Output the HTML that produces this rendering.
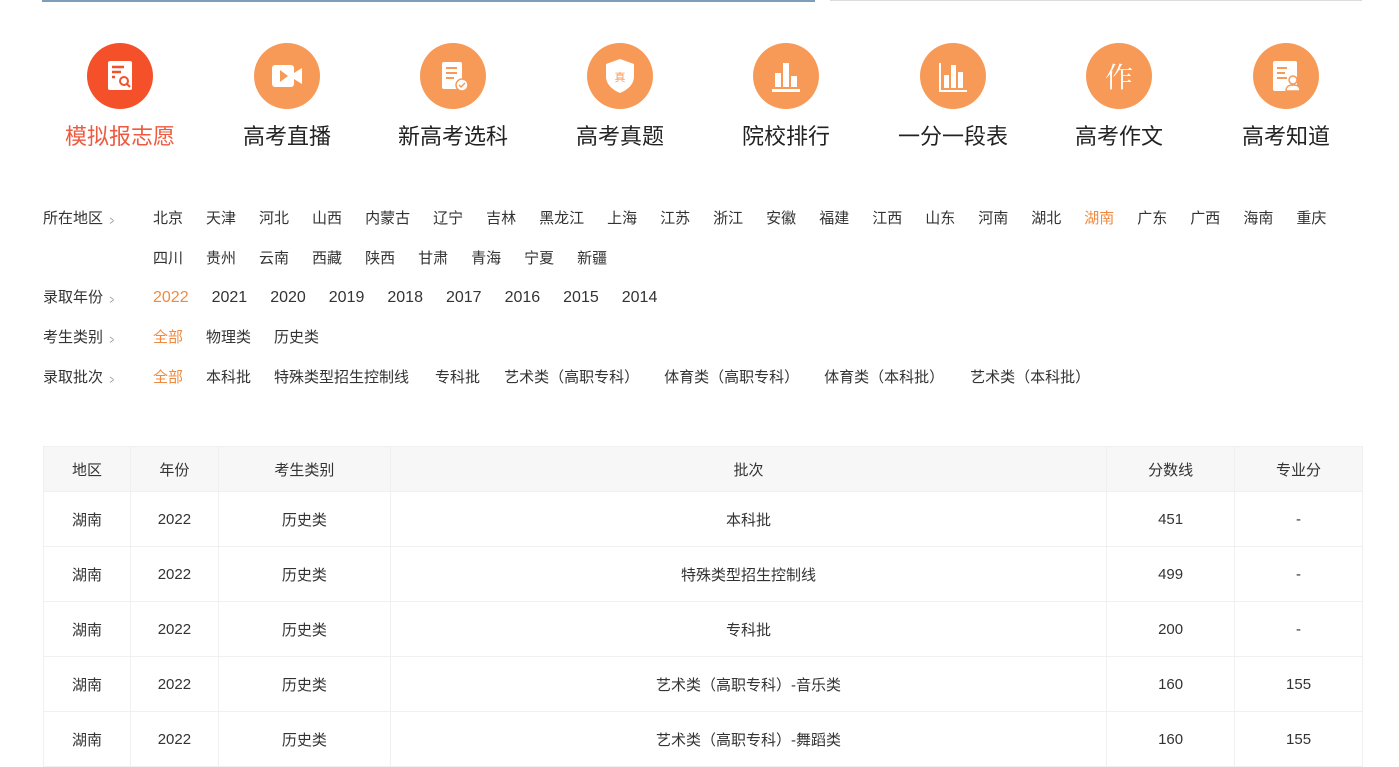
<!DOCTYPE html>
<html><head><meta charset="utf-8">
<style>
*{margin:0;padding:0;box-sizing:border-box}
body{width:1399px;height:750px;overflow:hidden;background:#fff;position:relative;font-family:"Liberation Sans","Noto Sans CJK SC",sans-serif;color:#333}
.topl{position:absolute;top:0;height:2px}
.ic{position:absolute;top:43px;width:66px;height:66px;border-radius:50%;background:#f89a57}
.ic svg{position:absolute;left:0;top:0}
.lb{position:absolute;top:122px;width:160px;text-align:center;font-size:22px;color:#222;line-height:30px}
.fl{position:absolute;left:43px;font-size:15px;color:#333;line-height:20px}
.fl span.ar{display:inline-block;color:#999;font-size:13px;margin-left:5px;transform:scaleX(.6) translateY(2px)}
.row{position:absolute;left:153px;font-size:15px;line-height:20px;white-space:nowrap;color:#333}
.row span{margin-right:23px}
.row .on{color:#f08a40}
table{position:absolute;left:43px;top:446px;width:1320px;border-collapse:collapse;font-size:15px;color:#333}
td,th{border:1px solid #f0f0f0;text-align:center;font-weight:normal;height:55px}
th{background:#f7f7f7;height:45px}
</style></head><body>
<div class="topl" style="left:42px;width:773px;background:#7d9db8"></div>
<div class="topl" style="left:830px;width:532px;background:#ddd;height:1px"></div>

<div class="ic" style="left:87px;background:#f4512b"><svg width="66" height="66"><rect x="21" y="18" width="24" height="29" rx="2" fill="#fff"/><path d="M25 24h12M25 29h9M25 34h3" stroke="#f4512b" stroke-width="2.5"/><circle cx="37" cy="38" r="4" fill="none" stroke="#f4512b" stroke-width="2"/><path d="M40 41l3 3" stroke="#f4512b" stroke-width="2"/></svg></div>
<div class="ic" style="left:254px"><svg width="66" height="66"><rect x="18" y="22" width="22" height="22" rx="3" fill="#fff"/><path d="M40 30l8-5v16l-8-5z" fill="#fff"/><path d="M26 27v12l8-6z" fill="#f89a57"/></svg></div>
<div class="ic" style="left:420px"><svg width="66" height="66"><rect x="22" y="19" width="20" height="27" rx="2" fill="#fff"/><path d="M26 25h11M26 30h11M26 35h8" stroke="#f89a57" stroke-width="2"/><circle cx="42" cy="42" r="6" fill="#fff" stroke="#f89a57" stroke-width="1.5"/><path d="M39 42l2 2 4-4" stroke="#f89a57" stroke-width="1.5" fill="none"/></svg></div>
<div class="ic" style="left:587px"><svg width="66" height="66"><path d="M33 16l14 5v12c0 9-7 14-14 17-7-3-14-8-14-17V21z" fill="#fff"/><text x="33" y="38" font-size="11" fill="#f89a57" text-anchor="middle" font-family="Noto Sans CJK SC">真</text></svg></div>
<div class="ic" style="left:753px"><svg width="66" height="66"><rect x="22" y="30" width="6" height="14" fill="#fff"/><rect x="30" y="20" width="6" height="24" fill="#fff"/><rect x="38" y="33" width="6" height="11" fill="#fff"/><rect x="19" y="46" width="28" height="3" fill="#fff"/></svg></div>
<div class="ic" style="left:920px"><svg width="66" height="66"><path d="M20 20v28h27" stroke="#fff" stroke-width="2" fill="none"/><rect x="24" y="32" width="5" height="13" fill="#fff"/><rect x="31" y="22" width="5" height="23" fill="#fff"/><rect x="38" y="29" width="5" height="16" fill="#fff"/></svg></div>
<div class="ic" style="left:1086px"><svg width="66" height="66"><text x="33" y="44" font-size="28" fill="#fff" text-anchor="middle" font-family="Noto Serif CJK SC">作</text></svg></div>
<div class="ic" style="left:1253px"><svg width="66" height="66"><rect x="20" y="18" width="24" height="30" rx="2" fill="#fff"/><path d="M24 25h10M24 30h8M24 35h10" stroke="#f89a57" stroke-width="2"/><circle cx="40" cy="37" r="4" fill="#fff" stroke="#f89a57" stroke-width="1.5"/><path d="M33 48c0-5 3-6 7-6s7 1 7 6z" fill="#fff" stroke="#f89a57" stroke-width="1.5"/></svg></div>

<div class="lb" style="left:40px;color:#ee5a40">模拟报志愿</div>
<div class="lb" style="left:207px">高考直播</div>
<div class="lb" style="left:373px">新高考选科</div>
<div class="lb" style="left:540px">高考真题</div>
<div class="lb" style="left:706px">院校排行</div>
<div class="lb" style="left:873px">一分一段表</div>
<div class="lb" style="left:1039px">高考作文</div>
<div class="lb" style="left:1206px">高考知道</div>

<div class="fl" style="top:209px">所在地区<span class="ar">&gt;</span></div>
<div class="fl" style="top:288px">录取年份<span class="ar">&gt;</span></div>
<div class="fl" style="top:328px">考生类别<span class="ar">&gt;</span></div>
<div class="fl" style="top:368px">录取批次<span class="ar">&gt;</span></div>

<div class="row" style="top:209px"><span>北京</span><span>天津</span><span>河北</span><span>山西</span><span>内蒙古</span><span>辽宁</span><span>吉林</span><span>黑龙江</span><span>上海</span><span>江苏</span><span>浙江</span><span>安徽</span><span>福建</span><span>江西</span><span>山东</span><span>河南</span><span>湖北</span><span class="on">湖南</span><span>广东</span><span>广西</span><span>海南</span><span>重庆</span></div>
<div class="row" style="top:249px"><span>四川</span><span>贵州</span><span>云南</span><span>西藏</span><span>陕西</span><span>甘肃</span><span>青海</span><span>宁夏</span><span>新疆</span></div>
<div class="row" style="top:288px;font-size:16px"><span class="on">2022</span><span>2021</span><span>2020</span><span>2019</span><span>2018</span><span>2017</span><span>2016</span><span>2015</span><span>2014</span></div>
<div class="row" style="top:328px"><span class="on">全部</span><span>物理类</span><span>历史类</span></div>
<div class="row" style="top:368px"><span class="on" style="margin-right:23px">全部</span><span style="margin-right:23px">本科批</span><span style="margin-right:26px">特殊类型招生控制线</span><span style="margin-right:24px">专科批</span><span style="margin-right:25px">艺术类（高职专科）</span><span style="margin-right:25px">体育类（高职专科）</span><span style="margin-right:26px">体育类（本科批）</span><span>艺术类（本科批）</span></div>

<table>
<colgroup><col style="width:87px"><col style="width:88px"><col style="width:172px"><col style="width:717px"><col style="width:128px"><col style="width:128px"></colgroup>
<tr><th>地区</th><th>年份</th><th>考生类别</th><th>批次</th><th>分数线</th><th>专业分</th></tr>
<tr><td>湖南</td><td>2022</td><td>历史类</td><td>本科批</td><td>451</td><td>-</td></tr>
<tr><td>湖南</td><td>2022</td><td>历史类</td><td>特殊类型招生控制线</td><td>499</td><td>-</td></tr>
<tr><td>湖南</td><td>2022</td><td>历史类</td><td>专科批</td><td>200</td><td>-</td></tr>
<tr><td>湖南</td><td>2022</td><td>历史类</td><td>艺术类（高职专科）-音乐类</td><td>160</td><td>155</td></tr>
<tr><td>湖南</td><td>2022</td><td>历史类</td><td>艺术类（高职专科）-舞蹈类</td><td>160</td><td>155</td></tr>
</table>
</body></html>
